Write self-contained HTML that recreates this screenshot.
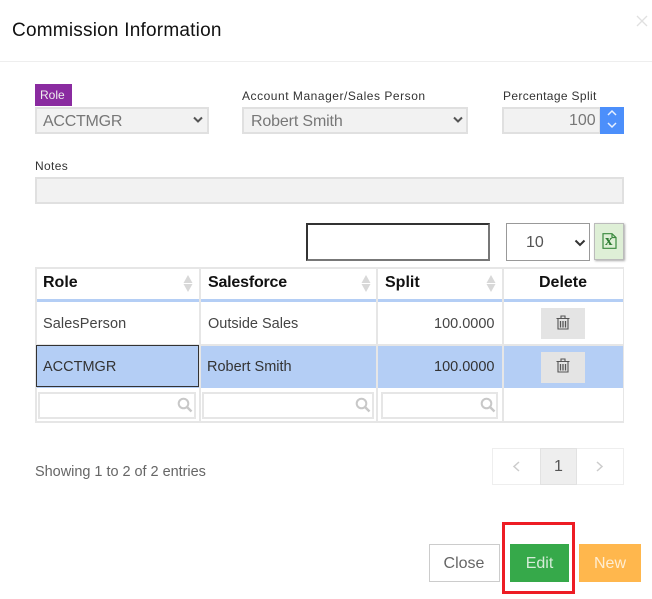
<!DOCTYPE html>
<html><head><meta charset="utf-8">
<style>
html,body{margin:0;padding:0;background:#fff;width:652px;height:599px;overflow:hidden}
body{font-family:"Liberation Sans",sans-serif;position:relative;color:#333;filter:blur(.3px)}
.a{position:absolute;box-sizing:border-box;white-space:nowrap}
.box{background:#f2f2f2;border:2px solid #e0e0e0}
.lab{font-size:12px;color:#333;letter-spacing:.35px;line-height:14px}
.val{font-size:16px;color:#777;line-height:20px}
.ln{background:#e6e6e6}
.th{font-size:16px;font-weight:bold;color:#111;line-height:18px}
.td{font-size:14.5px;color:#444;line-height:18px}
.flt{background:#fff;border:2px solid #e6e6e6}
.del{background:#e4e4e4}
</style></head><body>
<div class="a" style="left:12px;top:20px;font-size:19px;letter-spacing:.22px;line-height:22px;color:#111">Commission Information</div>
<svg class="a" style="left:636px;top:15px" width="12" height="12"><path d="M1 1L11 11M11 1L1 11" stroke="#e0e0e0" stroke-width="1.300" fill="none"/></svg>
<div class="a" style="left:0;top:61px;width:652px;height:1px;background:#eee"></div>

<div class="a" style="left:35px;top:84px;width:37px;height:22px;background:#8a2ba0;color:#eee;font-size:12px;line-height:22px;padding-left:5px">Role</div>
<div class="a box" style="left:35px;top:107px;width:174px;height:27px"></div>
<div class="a val" style="left:43px;top:112px;letter-spacing:-.25px">ACCTMGR</div>
<svg class="a" style="left:193px;top:116px" width="10" height="8"><path d="M1 1.500L5 5.500L9 1.500" stroke="#555" stroke-width="2" fill="none"/></svg>

<div class="a lab" style="left:242px;top:89px;letter-spacing:.53px">Account Manager/Sales Person</div>
<div class="a box" style="left:242px;top:107px;width:226px;height:27px"></div>
<div class="a val" style="left:251px;top:112px;letter-spacing:-.15px">Robert Smith</div>
<svg class="a" style="left:453px;top:116px" width="10" height="8"><path d="M1 1.500L5 5.500L9 1.500" stroke="#555" stroke-width="2" fill="none"/></svg>

<div class="a lab" style="left:503px;top:89px">Percentage Split</div>
<div class="a box" style="left:502px;top:107px;width:99px;height:27px"></div>
<div class="a val" style="left:569px;top:111px">100</div>
<div class="a" style="left:600px;top:107px;width:24px;height:27px;background:#4c8ffb"></div>
<svg class="a" style="left:606px;top:108px" width="12" height="22"><path d="M2 7L6 3L10 7M2 15L6 19L10 15" stroke="#e8f0ff" stroke-width="1.500" fill="none"/></svg>

<div class="a lab" style="left:35px;top:159px">Notes</div>
<div class="a box" style="left:35px;top:177px;width:589px;height:27px"></div>

<div class="a" style="left:306px;top:223px;width:184px;height:38px;background:#fff;border:2px solid;border-color:#333 #777 #777 #333"></div>
<div class="a" style="left:506px;top:223px;width:84px;height:38px;background:#fff;border:1.500px solid #999"></div>
<div class="a val" style="left:526px;top:233px;color:#555">10</div>
<svg class="a" style="left:574px;top:239px" width="12" height="9"><path d="M1.500 1.500L6 6L10.500 1.500" stroke="#333" stroke-width="2" fill="none"/></svg>
<div class="a" style="left:594px;top:223px;width:30px;height:37px;background:#deefd6;border:1px solid #bbb;box-shadow:1px 1px 2px #aaa"></div>
<svg class="a" style="left:602px;top:233px" width="15" height="16"><path d="M1 .7H10L14 4.500V15.300H1ZM10 .7V4.500H14" stroke="#3a8a3e" stroke-width="1.200" fill="none"/></svg>
<div class="a" style="left:605px;top:234px;font:bold 15px/14px 'Liberation Serif',serif;color:#2e7d32">x</div>

<!-- table -->
<div class="a" style="left:36px;top:345px;width:588px;height:43px;background:#b4cef5"></div>
<div class="a ln" style="left:35px;top:267px;width:589px;height:2px"></div>
<div class="a" style="left:36px;top:299px;width:588px;height:3px;background:#b4cef5"></div>
<div class="a ln" style="left:36px;top:344px;width:588px;height:2px"></div>
<div class="a ln" style="left:35px;top:421px;width:589px;height:2px"></div>
<div class="a ln" style="left:35px;top:267px;width:2px;height:155px"></div>
<div class="a ln" style="left:199px;top:267px;width:2px;height:155px"></div>
<div class="a ln" style="left:376px;top:267px;width:2px;height:155px"></div>
<div class="a ln" style="left:502px;top:267px;width:2px;height:155px"></div>
<div class="a ln" style="left:623px;top:267px;width:1px;height:155px"></div>
<div class="a" style="left:36px;top:345px;width:163px;height:42px;background:#b4cef5;border:1.500px solid #333"></div>

<div class="a th" style="left:43px;top:274px">Role</div>
<div class="a th" style="left:208px;top:274px;letter-spacing:-.2px">Salesforce</div>
<div class="a th" style="left:385px;top:274px">Split</div>
<div class="a th" style="left:539px;top:274px">Delete</div>
<svg class="a" style="left:183px;top:275px" width="10" height="17"><path d="M5 0L9.500 8H.5ZM5 17L.5 9H9.500Z" fill="#d8d8d8"/></svg>
<svg class="a" style="left:361px;top:275px" width="10" height="17"><path d="M5 0L9.500 8H.5ZM5 17L.5 9H9.500Z" fill="#d8d8d8"/></svg>
<svg class="a" style="left:486px;top:275px" width="10" height="17"><path d="M5 0L9.500 8H.5ZM5 17L.5 9H9.500Z" fill="#d8d8d8"/></svg>

<div class="a td" style="left:43px;top:315px;letter-spacing:.1px">SalesPerson</div>
<div class="a td" style="left:208px;top:315px">Outside Sales</div>
<div class="a td" style="left:434px;top:315px">100.0000</div>
<div class="a td" style="left:43px;top:358px;color:#333">ACCTMGR</div>
<div class="a td" style="left:207px;top:358px;color:#333">Robert Smith</div>
<div class="a td" style="left:434px;top:358px;color:#333">100.0000</div>

<div class="a del" style="left:541px;top:308px;width:44px;height:31px"></div>
<div class="a del" style="left:541px;top:352px;width:44px;height:31px"></div>
<svg class="a" style="left:556px;top:315px" width="14" height="16"><path d="M.5 3.500H13.500M5 3V1H9V3M2 4V14H12V4" stroke="#555" stroke-width="1.100" fill="none"/><path d="M4.500 6V12.500M7 6V12.500M9.500 6V12.500" stroke="#555" stroke-width="1.300"/></svg>
<svg class="a" style="left:556px;top:358px" width="14" height="16"><path d="M.5 3.500H13.500M5 3V1H9V3M2 4V14H12V4" stroke="#555" stroke-width="1.100" fill="none"/><path d="M4.500 6V12.500M7 6V12.500M9.500 6V12.500" stroke="#555" stroke-width="1.300"/></svg>

<div class="a flt" style="left:38px;top:392px;width:158px;height:27px"></div>
<div class="a flt" style="left:202px;top:392px;width:172px;height:27px"></div>
<div class="a flt" style="left:381px;top:392px;width:117px;height:27px"></div>
<svg class="a" style="left:177px;top:397px" width="16" height="16"><circle cx="6.500" cy="6.500" r="4.800" stroke="#c8c8c8" stroke-width="2" fill="none"/><path d="M10 10L14.500 14.500" stroke="#c8c8c8" stroke-width="2.400"/></svg>
<svg class="a" style="left:355px;top:397px" width="16" height="16"><circle cx="6.500" cy="6.500" r="4.800" stroke="#c8c8c8" stroke-width="2" fill="none"/><path d="M10 10L14.500 14.500" stroke="#c8c8c8" stroke-width="2.400"/></svg>
<svg class="a" style="left:480px;top:397px" width="16" height="16"><circle cx="6.500" cy="6.500" r="4.800" stroke="#c8c8c8" stroke-width="2" fill="none"/><path d="M10 10L14.500 14.500" stroke="#c8c8c8" stroke-width="2.400"/></svg>

<div class="a td" style="left:35px;top:463px;color:#666;letter-spacing:-.03px">Showing 1 to 2 of 2 entries</div>
<div class="a" style="left:492px;top:448px;width:132px;height:37px;border:1.500px solid #eee;background:#fff"></div>
<div class="a" style="left:540px;top:448px;width:37px;height:37px;background:#eee;border:1px solid #e2e2e2;font-size:16px;line-height:35px;text-align:center;color:#555">1</div>
<svg class="a" style="left:512px;top:460px" width="9" height="13"><path d="M7 2L2 6.500L7 11" stroke="#ccc" stroke-width="1.500" fill="none"/></svg>
<svg class="a" style="left:595px;top:460px" width="9" height="13"><path d="M2 2L7 6.500L2 11" stroke="#ccc" stroke-width="1.500" fill="none"/></svg>

<div class="a" style="left:429px;top:544px;width:71px;height:38px;border:1px solid #ccc;background:#fff;font-size:16px;line-height:37px;text-align:center;color:#666;padding-right:1px">Close</div>
<div class="a" style="left:510px;top:544px;width:59px;height:38px;background:#36a94a;font-size:16px;line-height:39px;text-align:center;color:#d5ecd8">Edit</div>
<div class="a" style="left:579px;top:544px;width:62px;height:38px;background:#ffb74d;font-size:16px;line-height:39px;text-align:center;color:#ffedd2">New</div>
<div class="a" style="left:502px;top:522px;width:73px;height:72px;border:3px solid #ed1c24"></div>
</body></html>
